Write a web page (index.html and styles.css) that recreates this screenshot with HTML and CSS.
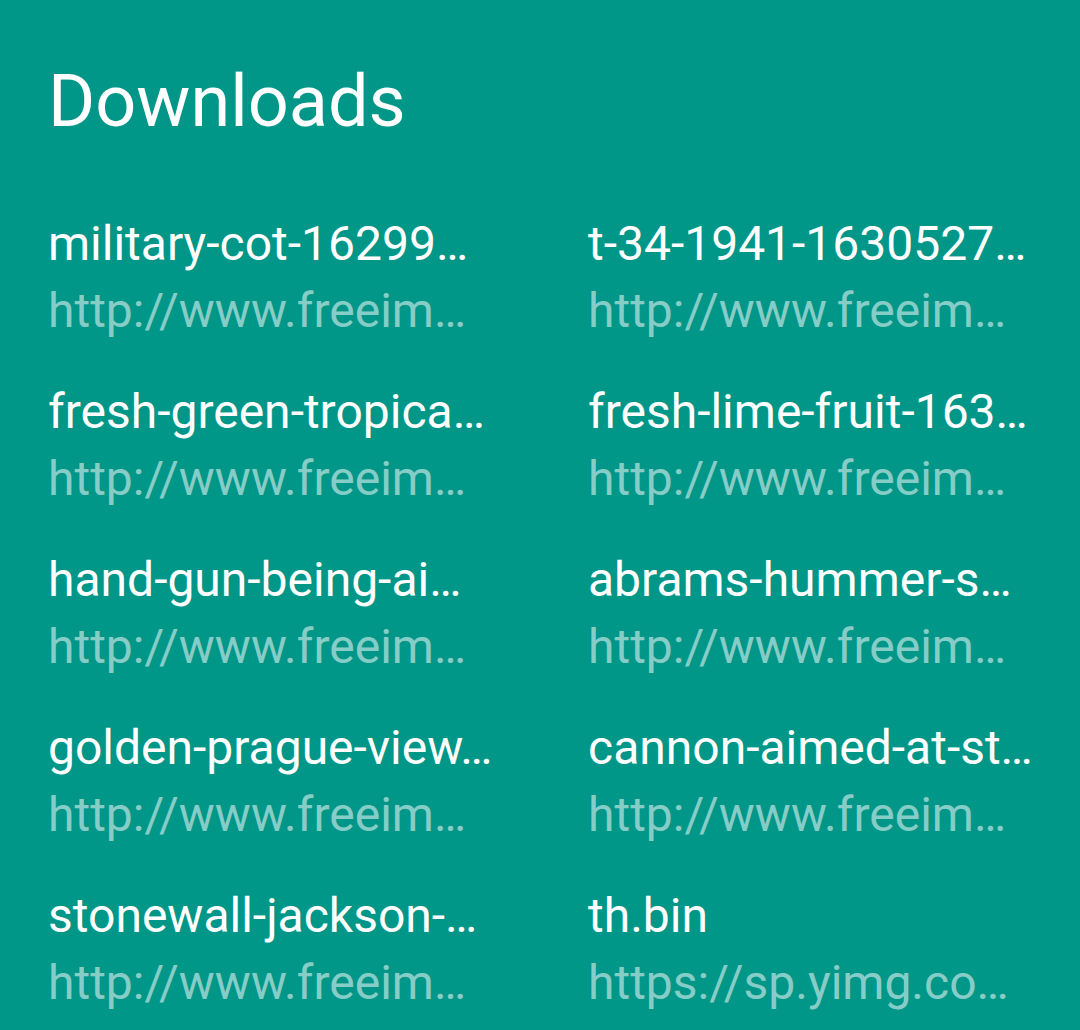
FILE: index.html
```html
<!DOCTYPE html>
<html lang="en">
<head>
    <meta charset="UTF-8">
    <meta name="viewport" content="width=device-width, initial-scale=1.0">
    <title>Downloads</title>
    <link rel="stylesheet" href="styles.css">
</head>
<body>
    <h1 class="title">Downloads</h1>

    <div class="downloads">
        <div class="item">
            <div class="name">military-cot-16299…</div>
            <div class="url">http://www.freeim…</div>
        </div>
        <div class="item">
            <div class="name">t-34-1941-1630527…</div>
            <div class="url">http://www.freeim…</div>
        </div>
        <div class="item">
            <div class="name">fresh-green-tropica…</div>
            <div class="url">http://www.freeim…</div>
        </div>
        <div class="item">
            <div class="name">fresh-lime-fruit-163…</div>
            <div class="url">http://www.freeim…</div>
        </div>
        <div class="item">
            <div class="name">hand-gun-being-ai…</div>
            <div class="url">http://www.freeim…</div>
        </div>
        <div class="item">
            <div class="name">abrams-hummer-s…</div>
            <div class="url">http://www.freeim…</div>
        </div>
        <div class="item">
            <div class="name">golden-prague-view…</div>
            <div class="url">http://www.freeim…</div>
        </div>
        <div class="item">
            <div class="name">cannon-aimed-at-st…</div>
            <div class="url">http://www.freeim…</div>
        </div>
        <div class="item">
            <div class="name">stonewall-jackson-…</div>
            <div class="url">http://www.freeim…</div>
        </div>
        <div class="item">
            <div class="name">th.bin</div>
            <div class="url">https://sp.yimg.co…</div>
        </div>
    </div>
</body>
</html>
```

FILE: styles.css
```css
body { margin: 0; padding: 66px 40px 0 48px; background: #009688; color: #fff; font-family: Roboto, "Noto Sans", sans-serif; }
.title { margin: 0 0 74px; font-size: 72px; line-height: 72px; font-weight: 400; }
.downloads { display: grid; grid-template-columns: 446px 450px; column-gap: 94px; row-gap: 36px; }
.name, .url { white-space: nowrap; line-height: 66px; font-size: 48px; }
.name { margin-top: -1px; margin-bottom: 1px; }
.url { color: rgba(255, 255, 255, 0.54); }
```
